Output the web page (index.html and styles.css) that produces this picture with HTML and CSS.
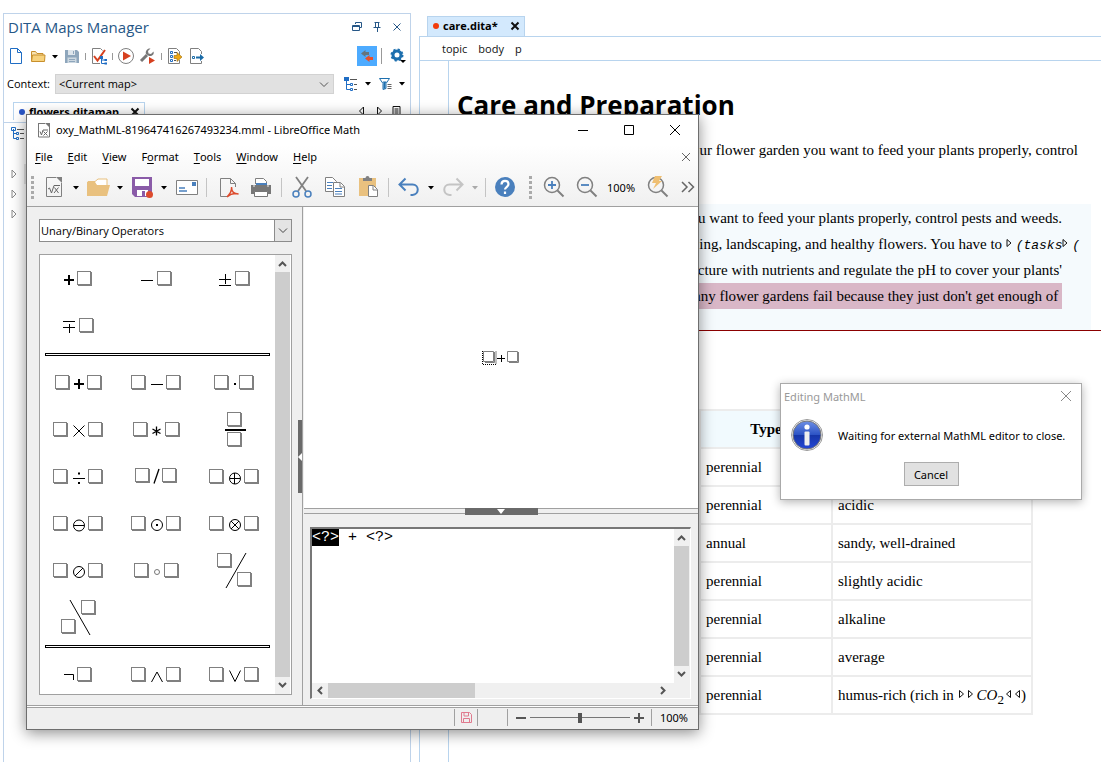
FILE: index.html
```html
<!DOCTYPE html>
<html lang="en">
<head>
<meta charset="utf-8">
<title>care.dita</title>
<link rel="stylesheet" href="styles.css">
</head>
<body>
<svg class="defs" aria-hidden="true">
  <symbol id="box" viewBox="0 0 15 15"><rect x=".5" y=".5" width="13" height="13" fill="#fff" stroke="#808080"/><path d="M13 1h2v14H1v-2h12z" fill="#808080" stroke="none"/></symbol>
  <symbol id="caret" viewBox="0 0 8 5"><path d="M1 1h6L4 4.500z" fill="currentColor"/></symbol>
  <symbol id="lens" viewBox="0 0 24 24"><circle cx="11" cy="10" r="7.500" fill="none" stroke="#808080" stroke-width="1.500"/><path d="M16.500 15.500l6 6" stroke="#808080" stroke-width="2"/></symbol>
</svg>
<div class="app">
  <aside class="maps">
    <header class="maps-head">
      <h2>DITA Maps Manager</h2>
      <div class="maps-win">
        <button aria-label="Restore"><svg width="12" height="12" fill="none" stroke="#265787"><path d="M1.500 4.500h7v5h-7zM1.500 5.500h7M4.500 3V1.500h6v5H9"/></svg></button>
        <button aria-label="Pin"><svg width="12" height="12" fill="none" stroke="#265787"><path d="M3.500 1.500h5M4.500 1.500v5M7.500 1v5.500M2.500 6.500h7M6.500 7v4"/></svg></button>
        <button aria-label="Close"><svg width="12" height="12" fill="none" stroke="#265787"><path d="M2.500 2.500l7 7M9.500 2.500l-7 7"/></svg></button>
      </div>
    </header>
    <div class="maps-tools">
      <button aria-label="New"><svg width="18" height="18"><path d="M3.500 1.500h7l4 4v11h-11z" fill="#fff" stroke="#1f6dc4"/><path d="M10.500 1.500v4h4" fill="none" stroke="#1f6dc4"/></svg></button>
      <button aria-label="Open"><svg width="18" height="18"><path d="M2.500 14V4.500h4l1.500 2h6V9" fill="#f8e3b0" stroke="#c88f2c"/><path d="M2.500 14.500l1-6.500h12.500l-.5 6.500z" fill="#f7d27d" stroke="#c88f2c"/></svg></button>
      <svg class="caret" width="8" height="5"><use href="#caret"/></svg>
      <button aria-label="Save"><svg width="18" height="18"><path d="M2 3h12l2 2v11H2z" fill="#8ea6bc"/><path d="M5 3h7v5H5z" fill="#dde5ec"/><path d="M4.500 10.500h9V16h-9z" fill="#cdd8e1"/><path d="M6 12.500h6M6 14.500h6M10.500 4v3" stroke="#8ea6bc"/></svg></button>
      <i class="tick"></i>
      <button aria-label="Validate"><svg width="18" height="18" fill="none"><path d="M10 16.500H2.500v-15h8l2 2" stroke="#808080"/><path d="M4 9l3.500 4.500L15 3" stroke="#d6401f" stroke-width="2"/><path d="M11.500 10v6.500H15M11.500 13H15" stroke="#1f6dc4"/><path d="M10 9h3v3h-3zM14.500 12h2.500v2h-2.500zM14.500 15.500h2.500v2h-2.500z" fill="#1f6dc4"/></svg></button>
      <i class="tick"></i>
      <button aria-label="Transform"><svg width="18" height="18"><circle cx="9" cy="9" r="7.500" fill="#fff" stroke="#808080"/><path d="M6 4.500v9L14 9z" fill="#d6401f"/></svg></button>
      <button aria-label="Configure"><svg width="18" height="18"><path d="M2 14l6-6" stroke="#777" stroke-width="3"/><path d="M11.500 1.500L9 4l.5 2.500L12 7l2.500-2.500c1 3-1.500 5-4.500 4.500L7 7c-1-3 1.500-6 4.500-5.500z" fill="#777"/><path d="M10 10v7l6-3.500z" fill="#d6401f"/></svg></button>
      <i class="tick"></i>
      <button aria-label="Insert"><svg width="18" height="18" fill="none"><path d="M8 16.500H2.500v-15h8l3 3V8M13.500 13v3.500H8" stroke="#808080"/><path d="M4.500 4.500h2v2h-2zM4.500 8.500h2v2h-2zM4.500 12.500h2v2h-2z" stroke="#1f6dc4"/><path d="M8 5.500h3M8 13.500h2" stroke="#555"/><path d="M8 8.500h3v-3l5 4.500-5 4.500v-3H8z" fill="#eda817" stroke="#9a6a08" stroke-width=".6"/></svg></button>
      <button aria-label="Export"><svg width="18" height="18" fill="none"><path d="M2.500 1.500h8l3 3V7M2.500 1.500v15h11V14" stroke="#808080"/><path d="M4.500 9.500h2v2h-2z" stroke="#1b6ca8"/><path d="M8 9.500h4V7l4 3.500-4 3.500v-2.500H8z" fill="#1b6ca8"/></svg></button>
      <span class="spring"></span>
      <button class="linked" aria-label="Link with editor" aria-pressed="true"><svg width="20" height="20"><path d="M4 7.500L8.500 4v2H12v3H8.500v2z" fill="#66747e"/><path d="M8 12.500L12.500 9v2H16v3h-3.500v2z" fill="#e5502c"/></svg></button>
      <i class="rule"></i>
      <button aria-label="Settings"><svg width="18" height="18"><circle cx="8" cy="8" r="4" fill="none" stroke="#1d6fae" stroke-width="3"/><circle cx="8" cy="8" r="5.500" fill="none" stroke="#1d6fae" stroke-width="2" stroke-dasharray="2.160 2.160"/><path d="M11 13h6l-3 3z"/></svg></button>
    </div>
    <div class="maps-context">
      <label for="ctx">Context:</label>
      <span class="ctx-box"><select id="ctx"><option>&lt;Current map&gt;</option></select><svg width="10" height="6" fill="none" stroke="#555"><path d="M1 .5l4 4 4-4"/></svg></span>
      <button aria-label="View mode"><svg width="16" height="16" fill="none"><path d="M3.500 3v10.500H7M3.500 8.500H7" stroke="#1f6dc4"/><path d="M1 1h5v4H1z" fill="#1f6dc4"/><path d="M7.500 7.500h2v2h-2zM7.500 12.500h2v2h-2z" stroke="#1f6dc4"/><path d="M7 3.500h7M11 8.500h3M11 13.500h3" stroke="#555"/></svg></button>
      <svg class="caret" width="8" height="5"><use href="#caret"/></svg>
      <button aria-label="Filter"><svg width="16" height="16"><path d="M2.500 2.500h10L9 7.500v5l-3 1v-6z" fill="#fff" stroke="#1d6fae"/><path d="M6 5.500h3.500L8.500 7.500v5l-2 .5V7.500z" fill="#1d6fae"/><path d="M10.500 8.500h4M10.500 10.500h4M10.500 12.500h4" stroke="#666"/></svg></button>
      <svg class="caret" width="8" height="5"><use href="#caret"/></svg>
    </div>
    <div class="maps-tabs">
      <div class="map-tab"><i class="dot blue"></i><b>flowers.ditamap</b><button aria-label="Close tab"><svg width="10" height="10"><path d="M1.500 1.500l7 7M8.500 1.500l-7 7" stroke="#111" stroke-width="2"/></svg></button></div>
      <div class="tab-nav">
        <svg width="8" height="10" fill="none" stroke="#111"><path d="M5.500 1v8L1.500 5z"/></svg>
        <svg width="8" height="10" fill="none" stroke="#111"><path d="M2.500 1v8l4-4z"/></svg>
        <svg width="9" height="10" fill="none" stroke="#111"><path d="M1 .5h7v9H1zM2.500 3h4M2.500 5h4M2.500 7h4"/></svg>
      </div>
    </div>
    <div class="map-tree">
      <svg width="16" height="14" fill="none"><path d="M2.500 2v9.500H6M2.500 6.500H6" stroke="#1f6dc4"/><path d="M.5.500h4v3h-4zM5.500 5.500h2v2h-2zM5.500 10.500h2v2h-2z" stroke="#1f6dc4"/><path d="M6 2.500h7M9 6.500h4M9 11.500h4" stroke="#555"/></svg>
      <ul>
        <li class="current"><svg width="6" height="10" fill="none" stroke="#888"><path d="M1 1v8l4-4z"/></svg></li>
        <li><svg width="6" height="10" fill="none" stroke="#888"><path d="M1 1v8l4-4z"/></svg></li>
        <li><svg width="6" height="10" fill="none" stroke="#888"><path d="M1 1v8l4-4z"/></svg></li>
      </ul>
    </div>
  </aside>

  <section class="editor">
    <div class="ed-tabs"><div class="ed-tab"><i class="dot red"></i><b>care.dita*</b><button aria-label="Close tab"><svg width="10" height="10"><path d="M1.500 1.500l7 7M8.500 1.500l-7 7" stroke="#111" stroke-width="2"/></svg></button></div></div>
    <div class="ed-frame">
      <nav class="crumbs"><a href="#t">topic</a><a href="#b">body</a><a href="#p">p</a></nav>
      <div class="ed-body">
        <div class="gutter"></div>
        <article class="page">
          <h1>Care and Preparation</h1>
          <p class="lead">ur flower garden you want to feed your plants properly, control</p>
          <div class="section">
            <p>u want to feed your plants properly, control pests and weeds.</p>
            <p class="wide">ing, landscaping, and healthy flowers. You have to <svg width="6" height="9" fill="none" stroke="#111"><path d="M1 .5v7L5 4z"/></svg> <em>(tasks</em><svg width="6" height="9" fill="none" stroke="#111"><path d="M1 .5v7L5 4z"/></svg> <em>(</em></p>
            <p>ucture with nutrients and regulate the pH to cover your plants'</p>
            <p><mark>many flower gardens fail because they just don't get enough of&nbsp;</mark></p>
          </div>
          <table>
            <thead><tr><th>Type</th><th></th></tr></thead>
            <tbody>
              <tr><td>perennial</td><td></td></tr>
              <tr><td>perennial</td><td>acidic</td></tr>
              <tr><td>annual</td><td>sandy, well-drained</td></tr>
              <tr><td>perennial</td><td>slightly acidic</td></tr>
              <tr><td>perennial</td><td>alkaline</td></tr>
              <tr><td>perennial</td><td>average</td></tr>
              <tr><td>perennial</td><td>humus-rich (rich in<svg width="19" height="9" fill="none" stroke="#111"><path d="M5.500 .5v7l4-3.500zM14.500 .5v7l4-3.500z"/></svg> <i>CO</i><sub>2</sub><svg width="17" height="9" fill="none" stroke="#111"><path d="M6.500 .5v7l-4-3.500zM15.500 .5v7l-4-3.500z"/></svg>)</td></tr>
            </tbody>
          </table>
        </article>
      </div>
    </div>
  </section>
</div>

<div class="math" role="dialog" aria-label="LibreOffice Math">
  <div class="math-top">
    <div class="math-title">
      <svg width="14" height="16" fill="none"><path d="M1.500 1v14h11V5" stroke="#777"/><path d="M1 1.500h7" stroke="#777"/><path d="M8 1h5v5z" fill="#777"/><path d="M3 9.500l1.500 3.500 1.500-5h5M6.500 9.500l4 4M10.500 9.500l-4 4" stroke="#666"/></svg>
      <span>oxy_MathML-819647416267493234.mml - LibreOffice Math</span>
      <div class="math-win">
        <button aria-label="Minimize"><svg width="12" height="12"><path d="M1 6.500h10" stroke="#000"/></svg></button>
        <button aria-label="Maximize"><svg width="12" height="12"><path d="M1.500 1.500h9v9h-9z" fill="none" stroke="#000"/></svg></button>
        <button aria-label="Close"><svg width="12" height="12"><path d="M1 1l10 10M11 1L1 11" stroke="#000"/></svg></button>
      </div>
    </div>
    <div class="math-menu">
      <button><u>F</u>ile</button><button><u>E</u>dit</button><button><u>V</u>iew</button><button>F<u>o</u>rmat</button><button><u>T</u>ools</button><button><u>W</u>indow</button><button><u>H</u>elp</button>
      <span class="spring"></span>
      <button aria-label="Close document"><svg width="10" height="10"><path d="M1 1l8 8M9 1L1 9" stroke="#666"/></svg></button>
    </div>
    <div class="math-tools">
      <i class="grip"></i>
      <button aria-label="New formula"><svg width="24" height="24" fill="none"><path d="M14 2.500H4.500v19h15V8" stroke="#808080"/><path d="M14 2h6v6z" fill="#808080"/><path d="M6 14l1.500-1 2 5L12 10.500h6M12.500 12.500l4 5.500M16.500 12.500L12 18" stroke="#666"/></svg></button>
      <button class="drop" aria-label="New menu"><svg width="8" height="5"><use href="#caret"/></svg></button>
      <button aria-label="Open"><svg width="24" height="24"><path d="M2 20V6.500h7l3-2.500h9v6" fill="#fff" stroke="#e9c17f"/><path d="M1 21V7h8l2 3h13l-3 11z" fill="#e9c17f"/></svg></button>
      <button class="drop" aria-label="Open menu"><svg width="8" height="5"><use href="#caret"/></svg></button>
      <button aria-label="Save"><svg width="24" height="24"><path d="M2 2h20v20H5l-3-3z" fill="#8a5ba8"/><path d="M5 4h14v7H5z" fill="#fff"/><path d="M7 15h11v6H7z" fill="#fff"/><path d="M12 16h3v5h-3z" fill="#8a5ba8"/><circle cx="19.500" cy="19.500" r="3.500" fill="#dd4b2d"/></svg></button>
      <button class="drop" aria-label="Save menu"><svg width="8" height="5"><use href="#caret"/></svg></button>
      <button aria-label="Mail"><svg width="24" height="24" fill="none"><path d="M2.500 5.500h21v14h-21z" fill="#fff" stroke="#808080"/><path d="M18 7h4v4h-4z" fill="#4a80bd"/><path d="M5 13h6M5 16h8" stroke="#4a80bd" stroke-width="1.500"/></svg></button>
      <i class="sep wide-sep"></i>
      <button aria-label="Export PDF"><svg width="24" height="24" fill="none"><path d="M11 21.500H4.500v-18h10l5 5V12M14.500 3.500v5h5" stroke="#808080"/><path d="M11 22c3-3 5-7 4.500-10 0 4 2 7 7 7-4-1-8 0-11.500 3z" stroke="#dd4b2d" stroke-width="1.500"/></svg></button>
      <button class="far" aria-label="Print"><svg width="24" height="24"><path d="M6.500 9V3.500h8l3 3V9" fill="#fff" stroke="#808080"/><path d="M7 8h11v3H7z" fill="#4a80bd"/><path d="M2 10h20v9H2z" fill="#777"/><path d="M4 11h2M18 11h2" stroke="#eee"/><path d="M5.500 16.500h13v5h-13z" fill="#fff" stroke="#777"/></svg></button>
      <i class="sep"></i>
      <button aria-label="Cut"><svg width="24" height="24" fill="none"><path d="M6 2l10 14M18 2L8 16" stroke="#808080" stroke-width="1.800"/><circle cx="6" cy="19" r="3" stroke="#4a80bd" stroke-width="1.500"/><circle cx="18" cy="19" r="3" stroke="#4a80bd" stroke-width="1.500"/></svg></button>
      <button class="far" aria-label="Copy"><svg width="24" height="24"><path d="M2.500 2.500h7l4 4v10h-11z" fill="#fff" stroke="#808080"/><path d="M4 7.500h6M4 10.500h5M4 13.500h5" stroke="#4a80bd"/><path d="M10.500 7.500h7l4 4v10h-11z" fill="#fff" stroke="#808080"/><path d="M17 8v4h4" fill="none" stroke="#808080"/><path d="M12 13.500h7M12 16.500h7M12 19h7" stroke="#4a80bd"/></svg></button>
      <button class="far" aria-label="Paste"><svg width="24" height="24"><path d="M3 3h17v18H3z" fill="#e9c17f"/><path d="M7 3h2.500a2 2 0 0 1 4 0H16v3H7z" fill="#808080"/><path d="M12.500 10.500h5l4 4v7h-9z" fill="#fff" stroke="#808080"/><path d="M17 11v4h4" fill="none" stroke="#808080"/></svg></button>
      <i class="sep"></i>
      <button aria-label="Undo"><svg width="24" height="24" fill="none"><path d="M8.500 3.500l-6 6 6 6M3 9.500h12.500c7 0 7 10 0 10.500h-2" stroke="#4a80bd" stroke-width="2"/></svg></button>
      <button class="drop" aria-label="Undo menu"><svg width="8" height="5"><use href="#caret"/></svg></button>
      <button aria-label="Redo"><svg width="24" height="24" fill="none"><path d="M15.500 3.500l6 6-6 6M21 9.500H8.500c-7 0-7 10 0 10.500h2" stroke="#c4c4c4" stroke-width="2"/></svg></button>
      <button class="drop off" aria-label="Redo menu"><svg width="8" height="5"><use href="#caret"/></svg></button>
      <i class="sep tight"></i>
      <button aria-label="Help"><svg width="24" height="24" fill="none"><circle cx="12" cy="12" r="10" fill="#4a80bd"/><path d="M8.500 9.500c0-5 7-4.500 7-.5 0 3-3.500 3-3.500 5.500" stroke="#fff" stroke-width="2.200"/><path d="M12 16.500v2.500" stroke="#fff" stroke-width="2.200"/></svg></button>
      <i class="grip mid"></i>
      <button aria-label="Zoom in"><svg width="24" height="24"><use href="#lens"/><path d="M7 10h8M11 6v8" stroke="#4a80bd" stroke-width="1.800"/></svg></button>
      <button class="far" aria-label="Zoom out"><svg width="24" height="24"><use href="#lens"/><path d="M7 10h8" stroke="#4a80bd" stroke-width="1.800"/></svg></button>
      <button class="pct">100%</button>
      <button aria-label="Update"><svg width="24" height="24"><use href="#lens"/><path d="M10 1h7l-3 5h3L8 14l3-6H7z" fill="#efbf72"/></svg></button>
      <button class="more" aria-label="More"><svg width="14" height="12" fill="none" stroke="#666" stroke-width="1.500"><path d="M1 1l5 5-5 5M7.500 1l5 5-5 5"/></svg></button>
    </div>
  </div>

  <div class="math-body">
    <div class="elements">
      <span class="set-box"><select aria-label="Element set"><option>Unary/Binary Operators</option></select><span class="set-arrow"><svg width="10" height="6" fill="none" stroke="#444"><path d="M1 .5l4 4 4-4"/></svg></span></span>
      <div class="palette">
        <div class="ops">
          <button aria-label="+a"><svg viewBox="0 0 78 47"><path d="M24 25h10M29 20v10" class="bold"/><use href="#box" x="37" y="16" width="15" height="15"/></svg></button>
          <button aria-label="-a"><svg viewBox="0 0 78 47"><path d="M23 25.500h12"/><use href="#box" x="39" y="16" width="15" height="15"/></svg></button>
          <button aria-label="±a"><svg viewBox="0 0 78 47"><path d="M23 24.500h12M29.500 19v10M23 30.500h12"/><use href="#box" x="39" y="16" width="15" height="15"/></svg></button>
          <button aria-label="∓a"><svg viewBox="0 0 78 47"><path d="M23 19.500h12M23 25.500h12M29.500 22v9"/><use href="#box" x="39" y="16" width="15" height="15"/></svg></button>
          <hr>
          <button aria-label="a+b"><svg viewBox="0 0 78 47"><path d="M34 25h10M39 20v10" class="bold"/><use href="#box" x="15" y="16" width="15" height="15"/><use href="#box" x="47" y="16" width="15" height="15"/></svg></button>
          <button aria-label="a-b"><svg viewBox="0 0 78 47"><path d="M33 25.500h12"/><use href="#box" x="13" y="16" width="15" height="15"/><use href="#box" x="48" y="16" width="15" height="15"/></svg></button>
          <button aria-label="a·b"><svg viewBox="0 0 78 47"><path d="M38 25h2" class="bold"/><use href="#box" x="18" y="16" width="15" height="15"/><use href="#box" x="43" y="16" width="15" height="15"/></svg></button>
          <button aria-label="a×b"><svg viewBox="0 0 78 47"><path d="M33.500 19.500l11 11M44.500 19.500l-11 11"/><use href="#box" x="13" y="16" width="15" height="15"/><use href="#box" x="48" y="16" width="15" height="15"/></svg></button>
          <button aria-label="a∗b"><svg viewBox="0 0 78 47"><path d="M38.500 20.500v9M34.500 23l8 4.500M42.500 23l-8 4.500" stroke-width="1.300"/><use href="#box" x="15" y="16" width="15" height="15"/><use href="#box" x="47" y="16" width="15" height="15"/></svg></button>
          <button aria-label="a over b"><svg viewBox="0 0 78 47"><path d="M29 24h21" class="bold"/><use href="#box" x="31" y="6" width="15" height="15"/><use href="#box" x="31" y="26" width="15" height="15"/></svg></button>
          <button aria-label="a÷b"><svg viewBox="0 0 78 47"><path d="M33 25.500h12"/><path d="M38 20.500h2M38 30h2" class="bold"/><use href="#box" x="13" y="16" width="15" height="15"/><use href="#box" x="48" y="16" width="15" height="15"/></svg></button>
          <button aria-label="a/b"><svg viewBox="0 0 78 47"><path d="M36 30.500l5-14.500" stroke-width="1.300"/><use href="#box" x="17" y="15" width="15" height="15"/><use href="#box" x="44" y="15" width="15" height="15"/></svg></button>
          <button aria-label="a⊕b"><svg viewBox="0 0 78 47"><circle cx="39" cy="25.500" r="5.500"/><path d="M33.500 25.500h11M38.500 20v11"/><use href="#box" x="13" y="16" width="15" height="15"/><use href="#box" x="48" y="16" width="15" height="15"/></svg></button>
          <button aria-label="a⊖b"><svg viewBox="0 0 78 47"><circle cx="39" cy="25.500" r="5.500"/><path d="M33.500 25.500h11"/><use href="#box" x="13" y="16" width="15" height="15"/><use href="#box" x="48" y="16" width="15" height="15"/></svg></button>
          <button aria-label="a⊙b"><svg viewBox="0 0 78 47"><circle cx="39" cy="25" r="5.500"/><path d="M38 25h2" class="bold"/><use href="#box" x="13" y="16" width="15" height="15"/><use href="#box" x="48" y="16" width="15" height="15"/></svg></button>
          <button aria-label="a⊗b"><svg viewBox="0 0 78 47"><circle cx="39" cy="25" r="5.500"/><path d="M35 21l8 8M43 21l-8 8"/><use href="#box" x="13" y="16" width="15" height="15"/><use href="#box" x="48" y="16" width="15" height="15"/></svg></button>
          <button aria-label="a⊘b"><svg viewBox="0 0 78 47"><circle cx="39" cy="25" r="5.500"/><path d="M43 21l-8 8"/><use href="#box" x="13" y="16" width="15" height="15"/><use href="#box" x="48" y="16" width="15" height="15"/></svg></button>
          <button aria-label="a∘b"><svg viewBox="0 0 78 47"><circle cx="39" cy="25" r="2.500" stroke="#777"/><use href="#box" x="16" y="16" width="15" height="15"/><use href="#box" x="46" y="16" width="15" height="15"/></svg></button>
          <button aria-label="a slash b"><svg viewBox="0 0 78 47"><path d="M50 6L30 41"/><use href="#box" x="21" y="6" width="15" height="15"/><use href="#box" x="41" y="25" width="15" height="15"/></svg></button>
          <button aria-label="a backslash b"><svg viewBox="0 0 78 47"><path d="M30 6l20 35"/><use href="#box" x="41" y="6" width="15" height="15"/><use href="#box" x="21" y="25" width="15" height="15"/></svg></button>
          <hr>
          <button aria-label="¬a"><svg viewBox="0 0 78 47"><path d="M24 23.500h9.500V29"/><use href="#box" x="37" y="16" width="15" height="15"/></svg></button>
          <button aria-label="a∧b"><svg viewBox="0 0 78 47"><path d="M33.500 31l5.500-10 5.500 10"/><use href="#box" x="13" y="16" width="15" height="15"/><use href="#box" x="48" y="16" width="15" height="15"/></svg></button>
          <button aria-label="a∨b"><svg viewBox="0 0 78 47"><path d="M33.500 19.500l5.500 11 5.500-11"/><use href="#box" x="13" y="16" width="15" height="15"/><use href="#box" x="48" y="16" width="15" height="15"/></svg></button>
        </div>
        <div class="vbar">
          <svg width="9" height="6"><path d="M1 5l3.500-3.500L8 5"/></svg><i></i><svg width="9" height="6"><path d="M1 1l3.500 3.500L8 1"/></svg>
        </div>
      </div>
      <div class="vhandle"><svg width="4" height="8"><path d="M4 0v8L0 4z" fill="#fff"/></svg></div>
    </div>
    <div class="work">
      <div class="formula"><svg width="38" height="16" role="img" aria-label="? + ?"><path d="M.5 1v13.500h13.500V1" fill="none" stroke="#000" stroke-dasharray="1 1"/><path d="M1.500 1.500h10v10h-10zM25.500 1.500h10v10h-10z" fill="#fff" stroke="#808080"/><path d="M12.500 2v10.500H3M36.500 2v10.500H27" fill="none" stroke="#808080"/><path d="M15 8.500h8M19.500 5v7" stroke="#000"/></svg></div>
      <div class="hsplit"><span><svg width="8" height="5"><path d="M0 0h8L4 5z" fill="#fff"/></svg></span></div>
      <div class="command">
        <div class="cmd-box">
          <div class="cmd-text" role="textbox" aria-label="Commands" contenteditable="true" spellcheck="false"><span class="sel">&lt;?&gt;</span> + &lt;?&gt;</div>
          <div class="vbar">
            <svg width="9" height="6"><path d="M1 5l3.500-3.500L8 5"/></svg><i></i><svg width="9" height="6"><path d="M1 1l3.500 3.500L8 1"/></svg>
          </div>
          <div class="hbar">
            <svg width="6" height="9"><path d="M5 1L1.500 4.500 5 8"/></svg><span><i></i></span><svg width="6" height="9"><path d="M1 1l3.500 3.500L1 8"/></svg>
          </div>
        </div>
      </div>
    </div>
  </div>

  <div class="status">
    <span class="cell mod"><svg width="11" height="11" fill="none" stroke="#e07a8e"><path d="M.5.500h8l2 2v8H.5zM3 1v3h4.500V1M2.500 10V6.500h6V10"/></svg></span>
    <span class="cell gap"></span>
    <span class="cell zoom">
      <button aria-label="Decrease"><svg width="10" height="10"><path d="M0 5h10" stroke="#555" stroke-width="2"/></svg></button>
      <input type="range" aria-label="Zoom" min="0" max="100" value="50">
      <button aria-label="Increase"><svg width="10" height="10"><path d="M0 5h10M5 0v10" stroke="#555" stroke-width="2"/></svg></button>
    </span>
    <span class="cell val">100%</span>
  </div>
</div>

<div class="notice" role="alertdialog" aria-label="Editing MathML">
  <div class="notice-head"><span>Editing MathML</span><button aria-label="Close"><svg width="12" height="12"><path d="M1 1l10 10M11 1L1 11" stroke="#888"/></svg></button></div>
  <div class="notice-msg">
    <svg width="34" height="34"><defs><linearGradient id="g" x2="0" y2="1"><stop stop-color="#6d8fe6"/><stop offset=".5" stop-color="#2b52c4"/><stop offset=".51" stop-color="#1636a8"/><stop offset="1" stop-color="#2447d6"/></linearGradient></defs><circle cx="17" cy="17" r="15.500" fill="#fff" stroke="#999"/><circle cx="17" cy="17" r="14" fill="url(#g)" stroke="#777"/><circle cx="17" cy="9" r="2.600" fill="#fff"/><rect x="14.500" y="13.500" width="5" height="14" rx="1" fill="#eee"/></svg>
    <span>Waiting for external MathML editor to close.</span>
  </div>
  <button class="cancel">Cancel</button>
</div>
</body>
</html>
```
FILE: styles.css
```css
* { box-sizing: border-box; }
html, body { height: 100%; }
body { margin: 0; background: #fff; color: #000; font-family: "Open Sans", "Noto Sans", sans-serif; font-size: 11px; overflow: hidden; }
button { border: 0; padding: 0; background: none; font: inherit; color: inherit; display: flex; align-items: center; justify-content: center; }
svg { display: block; flex: none; }
.defs { position: absolute; width: 0; height: 0; }
.spring { flex: 1; }

.app { display: flex; height: 100vh; gap: 8px; padding-left: 3px; }
.maps { flex: 0 0 408px; margin-top: 13px; border: 1px solid #bfd3ea; border-bottom: 0; }
.maps-head { display: flex; justify-content: space-between; align-items: center; height: 28px; padding: 0 7px 2px 4px; }
.maps-head h2 { margin: 0; font-size: 15px; font-weight: 400; color: #265787; }
.maps-win { display: flex; gap: 8px; }
.maps-tools { display: flex; align-items: center; gap: 4px; height: 28px; padding: 0 3px; }
.tick { width: 1px; height: 7px; background: #999; }
.rule { width: 1px; height: 16px; margin-right: 3px; background: #999; }
.linked { width: 20px; height: 20px; background: #4dabff; }
.maps-context { display: flex; align-items: center; gap: 5px; height: 27px; padding: 0 4px 0 3px; }
.ctx-box { flex: 1; position: relative; margin-right: 4px; }
.ctx-box select { appearance: none; width: 100%; height: 20px; padding: 0 3px; border: 1px solid #d2d2d2; background: #e1e1e1; font: inherit; }
.ctx-box svg { position: absolute; right: 5px; top: 8px; }
.maps-tabs { display: flex; justify-content: space-between; height: 26px; padding: 5px 9px 0 9px; border-bottom: 1px solid #bfd3ea; }
.map-tab, .ed-tab { display: flex; align-items: center; border: 1px solid #b8d4ee; border-bottom: 0; }
.map-tab { width: 132px; height: 18px; padding: 0 4px 0 5px; gap: 4px; }
.map-tab button, .ed-tab button { margin-left: auto; }
.dot { width: 6px; height: 6px; border-radius: 3px; }
.blue { background: #2a56c6; }
.red { background: #f23c0c; }
.tab-nav { display: flex; gap: 9px; padding-top: 4px; }
.map-tree { padding: 4px 7px; }
.map-tree ul { list-style: none; margin: 23px 0 0; padding: 0; }
.map-tree li { height: 20px; padding-top: 5px; }
.map-tree li.current { background: linear-gradient(to right, transparent 13px, #e6e6e6 13px); }

.editor { flex: 1; min-width: 0; display: flex; flex-direction: column; margin-top: 16px; }
.ed-tabs { padding-left: 8px; }
.ed-tab { width: 98px; height: 20px; padding: 0 4px 2px 5px; gap: 4px; background: #d3e9fd; }
.ed-frame { flex: 1; display: flex; flex-direction: column; border: 1px solid #b8d4ee; border-width: 1px 0 0 1px; }
.crumbs { display: flex; gap: 11px; height: 24px; padding-left: 22px; align-items: center; border-bottom: 1px solid #b8d4ee; }
.crumbs a { color: #111; text-decoration: none; }
.ed-body { flex: 1; display: flex; }
.gutter { width: 29px; border-right: 1px solid #b8d4ee; }
.page { flex: 1; min-width: 0; padding-left: 8px; font-family: "Liberation Serif", serif; font-size: 15px; }
.page h1 { margin: 24px 0 0; font: 700 26px/40px "Open Sans", "Noto Sans", sans-serif; }
.page p { margin: 0; height: 26px; line-height: 26px; text-align: right; white-space: nowrap; }
.page p svg { display: inline-block; vertical-align: 1px; }
.page .lead { margin: 12px 23px 41px 0; }
.section { position: relative; margin-right: 10px; padding: 1px 29px 22px 0; background: #f5fafd; }
.section::after { content: ""; position: absolute; left: 0; right: -10px; bottom: 0; height: 1px; background: #8b0000; }
.page .wide { margin-right: -18px; }
.section em { font: italic 13px "Liberation Mono", monospace; }
mark { display: inline-block; height: 26px; background: #d9b7c7; color: inherit; }
table { margin: 78px 0 0 242px; border-collapse: collapse; }
th, td { height: 38px; padding: 0 5px; border: 2px solid #ececec; text-align: left; white-space: nowrap; }
th { background: #f1fafe; text-align: center; }
th:first-child { width: 132px; }
th:last-child { width: 199px; }
td svg { display: inline-block; vertical-align: 1px; }
td sub { line-height: 0; font-size: 13px; }

.math { position: absolute; left: 26px; top: 114px; width: 673px; height: 616px; display: flex; flex-direction: column; border: 1px solid #6e6e6e; background: #efefef; box-shadow: 0 3px 14px rgba(0,0,0,.45); font-family: "Noto Sans", sans-serif; }
.math-top { height: 92px; border-bottom: 1px solid #a0a0a0; background: linear-gradient(#fff 30px, #f0f0f0); }
.math-title { display: flex; align-items: center; height: 29px; gap: 5px; padding: 0 17px 0 10px; }
.math-title > span { margin-right: auto; }
.math-win { display: flex; gap: 34px; }
.math-menu { display: flex; align-items: center; height: 25px; gap: 15px; padding: 0 7px 0 8px; }
.math-menu u { text-underline-offset: 2px; }
.math-tools { display: flex; align-items: center; height: 36px; padding-left: 4px; }
.grip { width: 3px; height: 23px; margin-right: 8px; background: repeating-linear-gradient(#aaa 0 3px, transparent 3px 5px); }
.grip.mid { margin: 0 9px 0 12px; }
.drop { width: 20px; }
.off { color: #aaa; }
.sep { width: 1px; height: 19px; margin: 0 8px; background: #c4c4c4; }
.sep.wide-sep { margin-right: 9px; }
.sep.tight { margin: 0 7px 0 0; }
.far { margin-left: 9px; }
.pct { margin: 0 10px 0 9px; }
.more { margin-left: 12px; }

.math-body { flex: 1; min-height: 0; display: flex; }
.elements { flex: 0 0 276px; position: relative; display: flex; flex-direction: column; gap: 12px; padding: 12px 10px 10px 12px; border-right: 1px solid #a0a0a0; }
.set-box { display: flex; width: 253px; height: 23px; border: 1px solid #8c8c8c; background: #fff; }
.set-box select { flex: 1; appearance: none; border: 0; padding: 0 1px; background: none; font-family: "Open Sans", sans-serif; font-size: 11px; }
.set-arrow { display: flex; align-items: center; justify-content: center; width: 17px; border-left: 1px solid #8c8c8c; background: #e4e4e4; }
.palette { flex: 1; min-height: 0; display: flex; width: 253px; border: 1px solid #a0a0a0; background: #fff; }
.ops { flex: 1; display: grid; grid-template-columns: repeat(3, 78px); grid-auto-rows: max-content; overflow: hidden; align-content: start; }
.ops svg { width: 78px; height: 47px; fill: none; stroke: #000; }
.ops .bold { stroke-width: 2; }
.ops hr { grid-column: 1 / -1; width: 225px; height: 3px; margin: 4px 0 3px 5px; border: 1px solid #000; }
.vbar { display: flex; flex-direction: column; align-items: center; justify-content: space-between; width: 15px; padding: 6px 0; margin-right: 1px; background: #f0f0f0; gap: 5px; }
.vbar i { flex: 1; width: 100%; background: #cdcdcd; }
.vbar svg, .hbar svg { fill: none; stroke: #555; stroke-width: 2; }
.vhandle { position: absolute; right: 0; top: 213px; width: 4px; height: 73px; display: flex; align-items: center; background: #6a6a6a; }
.work { flex: 1; display: flex; flex-direction: column; min-width: 0; padding-left: 1px; }
.formula { flex: 1; display: flex; align-items: center; justify-content: center; background: #fff; }
.hsplit { display: flex; justify-content: center; height: 6px; border: 1px solid #a0a0a0; border-width: 1px 0; }
.hsplit span { width: 73px; height: 7px; margin-top: -1px; display: flex; justify-content: center; align-items: center; background: #6a6a6a; }
.command { height: 191px; padding: 13px 7px 6px 6px; }
.cmd-box { display: grid; grid-template: 1fr 15px / 1fr 16px; height: 100%; border: 1px solid #fff; border-top: 2px solid #777; border-left: 2px solid #777; background: #f0f0f0; }
.cmd-text { background: #fff; font: 15px/17px "Liberation Mono", monospace; outline: 0; }
.sel { background: #000; color: #fff; }
.hbar { display: flex; align-items: center; padding: 0 8px 0 5px; gap: 5px; }
.hbar span { flex: 1; height: 15px; }
.hbar i { display: block; width: 45%; height: 100%; background: #cdcdcd; }
.status { display: flex; align-items: center; justify-content: flex-end; height: 24px; border-top: 1px solid #a0a0a0; box-shadow: inset 0 1px #fff, inset 0 2px #a0a0a0; }
.cell { display: flex; align-items: center; justify-content: center; height: 17px; border-left: 1px solid #a0a0a0; }
.mod { width: 23px; }
.gap { width: 30px; }
.zoom { width: 144px; gap: 4px; }
.zoom input { appearance: none; width: 100px; height: 12px; margin: 0; background: linear-gradient(#777, #777) center / 100% 1px no-repeat; }
.zoom input::-webkit-slider-thumb { appearance: none; width: 4px; height: 10px; background: #555; }
.val { width: 47px; padding-right: 2px; }

.notice { position: absolute; left: 780px; top: 383px; width: 302px; height: 117px; border: 1px solid #aaa; background: #fff; box-shadow: 0 2px 9px rgba(0,0,0,.3); font-family: "Noto Sans", sans-serif; }
.notice-head { display: flex; justify-content: space-between; align-items: center; height: 24px; padding: 0 9px 0 3px; color: #999; }
.notice-msg { display: flex; align-items: center; height: 54px; gap: 14px; padding-left: 9px; }
.cancel { width: 55px; height: 24px; margin: 0 auto; border: 1px solid #adadad; background: #e1e1e1; }
```
